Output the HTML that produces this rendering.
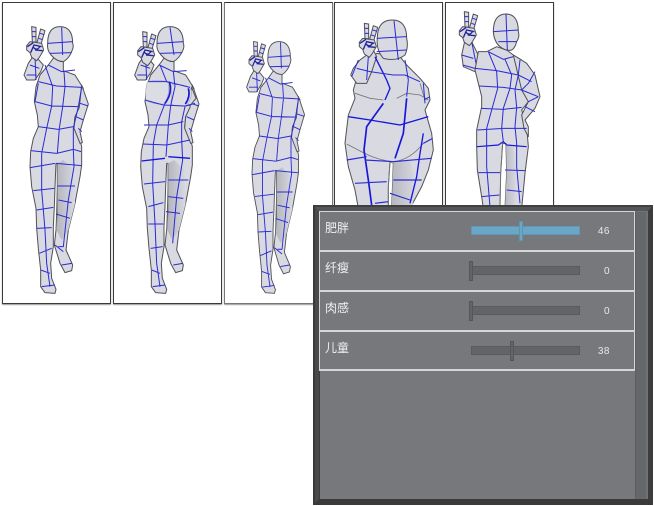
<!DOCTYPE html>
<html lang="zh">
<head>
<meta charset="utf-8">
<style>
html,body{margin:0;padding:0;background:#fff;width:654px;height:506px;overflow:hidden}
.card{position:absolute;box-sizing:border-box;top:2px;width:109px;height:302px;background:#fff;border:1px solid #3a3a3a;box-shadow:0 1px 1px #999}
svg.art{position:absolute;left:0;top:0;filter:blur(.35px)}
.panel{position:absolute;left:313px;top:205px;width:340px;height:300px;box-sizing:border-box;background:#77787b;border-style:solid;border-color:#555658 #3c3c3c #3a3a3a #4a4a4a;border-width:6px 5px 6px 6px;box-shadow:inset 1px 1px 0 #3c3c3c}
.panel:before{content:"";position:absolute;left:-6px;top:-6px;right:-5px;height:2px;background:#404040}
.panel:after{content:"";position:absolute;left:-6px;top:-6px;bottom:-6px;width:2px;background:#3a3a3a}
.scroll{position:absolute;left:316px;top:0;width:13px;height:288px;box-sizing:border-box;background:#66676a;border-left:1px solid #5c5d60;border-right:2px solid #717275;border-top:1px solid #737477}
.row{position:absolute;left:0;width:316px;height:41px;box-sizing:border-box;border:1px solid #d6d6d6;border-bottom-width:2px;color:#f0f0f0}
.lab{position:absolute;left:5px;top:9px;font-size:12px;line-height:14px;font-family:"Liberation Sans","WenQuanYi Zen Hei","Noto Sans CJK SC",sans-serif}
.track{position:absolute;left:151px;top:14px;width:109px;height:9px;box-sizing:border-box;background:#636467;border:1px solid #595a5d}
.track.on{background:#6ba6c6;border-color:#5f97b6}
.h{position:absolute;top:9px;width:4px;height:20px;box-sizing:border-box;background:#636467;border:1px solid #55565a}
.h.on{background:#6ba6c6;border-color:#5d94b2}
.val{position:absolute;right:24px;top:14px;font-size:10px;line-height:12px;color:#e8e8e8;font-family:"Liberation Sans",sans-serif;letter-spacing:.5px}
.b{fill:#d8d9e1;stroke:#505056;stroke-width:3;stroke-linejoin:round}
.l{fill:none;stroke:#2a2ad4;stroke-width:3;stroke-linejoin:round}
.t{fill:none;stroke:#1616dc;stroke-width:5;stroke-linejoin:round}
.f{fill:none;stroke:#76767c;stroke-width:2.500}
</style>
</head>
<body>
<div class="card" style="left:2px"></div>
<div class="card" style="left:113px"></div>
<div class="card" style="left:224px;border-color:#777;border-top-color:#333"></div>
<div class="card" style="left:334px"></div>
<div class="card" style="left:445px"></div>

<svg class="art" width="654" height="506" viewBox="0 0 654 506">
<defs>
<linearGradient id="sh" x1="0" x2="1" y1="0" y2="0"><stop offset="0" stop-color="#b4b5bc"/><stop offset="1" stop-color="#d8d9e1"/></linearGradient>
<g id="hand">
<path class="b" d="M95 80L108 82L108 126L97 126Z"/>
<path class="b" d="M122 87L135 92L122 136L110 131Z"/>
<path class="l" d="M96 95H108M96 110H108M120 100L133 104M116 115L128 119"/>
<path class="b" d="M80 137L90 125L125 130L131 150L118 172L110 182L95 172L90 158L80 150Z"/>
<path d="M82 140L100 128M92 158L102 135L125 140M105 150L128 152M100 142Q112 155 120 138" fill="none" stroke="#22229a" stroke-width="4"/>
</g>
<g id="head1">
<path class="b" d="M143 130Q143 80 180 80Q218 80 218 130Q222 140 216 152Q208 175 190 185Q170 185 153 165Q140 150 143 130Z"/>
<path class="l" d="M143 130L218 125M150 160L215 158M185 82L188 165"/>
</g>
<g id="body1">
<path class="b" d="M100 168L85 190L72 225L80 240L105 240L122 215L130 195L115 178Z"/>
<path class="b" d="M165 168L145 195L120 225L108 260L103 305L112 345L115 380L100 415L92 455L90 500L95 560L108 625L110 685L115 745L122 810L122 860L135 878L165 880L168 868L155 835L152 790L160 740L160 680L163 620L165 560L168 490L172 490L172 560L170 640L168 690L163 735L180 790L195 818L215 812L218 795L198 750L205 690L225 610L240 530L245 495L245 440L235 400L222 380L225 350L240 320L250 265L225 225L190 212L190 175Z"/>
<path d="M170 492L172 490L172 640L170 690L185 720L205 690L225 610L222 510L190 480Z" fill="url(#sh)"/>
<path class="f" d="M168 490L172 492L172 640L168 690"/>
<path class="b" d="M245 255L265 312L250 360L240 395L247 428L240 430L232 410L222 385L225 350L238 322Z"/>
<path class="l" d="M90 195L118 205M80 225L110 225M105 170L108 240"/>
<path class="l" d="M240 310L265 318M228 350L250 360M235 385L245 395"/>
</g>
<g id="lines1">
<path class="l" d="M145 195L185 215L225 210M115 245L170 258L245 262M105 305L155 318L235 320M115 380L175 388L220 380M92 452L170 460L220 448L243 455M90 503L165 490M168 490L245 497M100 572L163 565M172 558L225 558M110 630L160 622M175 600L215 608M110 685L155 683M168 642L210 655M118 760L155 745M165 735L190 755M122 810L150 820M125 860L165 855M185 795L215 790M135 195L158 260L155 318L140 385L125 460L125 570L135 690L140 790L150 860M192 215L195 260L188 320L178 385L172 460M235 320L220 385L220 450L222 500L205 600L190 740L175 740M115 250L105 305M245 262L235 320"/>
</g>
</defs>

<!-- figure 1 -->
<g transform="scale(.33333)">
<use href="#body1"/><use href="#lines1"/><use href="#head1"/><use href="#hand"/>
</g>

<!-- figure 2 -->
<g transform="scale(.33333)">
<g transform="translate(332 0)"><use href="#body1"/></g>
<path class="b" d="M575 262L588 295L572 315L555 318L570 285Z"/>
<path d="M442 245Q490 235 505 250Q510 285 492 312Q460 315 437 300Q435 270 442 245ZM515 255Q550 250 572 265Q580 290 560 318Q530 320 512 312Q518 285 515 255Z" fill="#dcdde4" stroke="#9a9aa4" stroke-width="1.500"/>
<path class="l" d="M478 195L520 215L560 212M445 245L500 245L570 262M435 300L490 315L555 318L585 310M432 375L505 375L550 365M428 432L500 435L570 420M432 552L495 545M505 540L565 540M445 620L490 608M505 590L550 595M445 672L490 672M498 635L540 640M452 745L488 740M455 810L480 820M458 860L495 855M520 795L548 790M480 195L500 245M495 310L470 375L460 432L458 550L465 670L470 790L480 860M520 215L525 260L512 318L505 375L498 470M555 320L545 365L545 420L548 480L530 590L518 730"/>
<path class="t" style="stroke-width:4" d="M425 483L495 475M505 470L570 475"/>
<path class="t" d="M508 245Q518 280 495 310M565 265Q572 290 556 312"/>
<g transform="translate(330 0)"><path class="b" d="M141 130Q141 80 180 80Q220 80 220 130Q224 140 218 152Q208 175 190 185Q170 185 153 165Q138 150 141 130Z"/>
<path class="l" d="M141 130L220 125M150 160L217 158M180 82L192 165"/></g>
<g transform="translate(333 15)"><use href="#hand"/></g>
</g>

<!-- figure 3 -->
<g transform="translate(225 16.4) scale(.3 .3147)">
<use href="#body1"/><use href="#lines1"/><use href="#head1"/><use href="#hand"/>
</g>

<!-- figure 4 & 5 -->
<g transform="translate(220 0) scale(.33333)">
<path class="b" d="M470 160L420 200L400 270L405 295L385 345L375 430L385 500L405 570L415 625L505 625L505 560L510 485L520 490L515 625L570 625L605 560L625 510L640 450L635 400L615 330L630 300L625 265L600 235L560 195L540 170Z"/>
<path d="M510 487L520 490L515 625L575 625L590 560L570 480Z" fill="url(#sh)"/>
<path class="f" d="M510 487L505 560L505 625M405 280L450 295L490 300M530 295L560 280L600 285L625 300M430 458Q470 480 520 485Q570 480 610 430M380 432L430 458M600 250L615 300"/>
<path class="b" d="M460 150L420 180L400 205L392 225L410 250L440 250L455 215L470 170Z"/>
<path class="l" d="M415 180L395 230M410 205L450 215M445 170L440 240"/>
<path class="t" style="stroke-width:4" d="M465 170L500 240L510 265L495 300"/>
<path class="l" d="M450 215L520 225L555 225L600 245M555 180L565 240L560 290M610 250L615 310M630 290L612 300"/>
<path class="t" d="M560 295L550 400L525 475M490 310L440 380L432 450L445 540L455 615"/>
<path class="t" style="stroke-width:4" d="M385 350L450 360L540 375L625 350M610 400L600 460L590 530L570 610"/>
<path class="l" style="stroke-width:3.500" d="M380 480L440 470M435 480L520 485L635 475M405 550L500 545M520 540L605 540M465 610L505 605M510 580L570 600M610 430L638 415"/>
<path class="b" d="M472 115Q472 60 517 60Q560 60 560 115Q566 140 555 165Q530 185 490 175Q468 150 472 115Z"/>
<path class="l" d="M470 115L560 110M470 155L560 150M522 62L535 180"/>
<g transform="translate(338 -10)"><use href="#hand"/></g>

<path class="b" d="M735 120L725 165L730 200L765 215L790 200L770 155L755 125Z"/>
<path class="l" d="M725 165L760 175M728 195L765 205M755 125L770 200"/>
<path class="b" d="M830 140L800 155L775 155L765 210L785 290L785 320L770 390L770 440L772 510L785 590L790 625L840 625L842 520L848 430L858 430L860 520L855 625L905 625L915 520L925 440L920 380L905 330L925 305L905 180L880 165L860 150Z"/>
<path d="M850 432L858 432L860 520L855 625L885 625L890 520L880 440Z" fill="url(#sh)"/>
<path class="f" d="M848 430L842 520L840 625"/>
<path class="b" d="M880 165L920 190L945 225L960 290L945 325L915 360L925 380L925 410L912 385L905 345L925 305L905 270Z"/>
<path class="l" d="M805 155L850 178L880 170M765 205L830 212L895 225L935 245M778 258L850 262L905 270L955 290M785 325L850 328L905 322M772 390L850 385L920 385M775 518L840 518M855 510L915 512M785 590L838 585M860 570L905 575M805 155L830 215L833 265L815 330L800 385L800 500L810 620M855 178L875 225L870 265L850 325L845 385L850 425M900 180L895 225L885 270L890 322L885 380L890 430L890 500L900 610M945 215L925 250L905 270M925 305L955 290M915 320L945 335"/>
<path class="t" style="stroke-width:3.500" d="M770 440L835 435L850 425L860 435L920 440"/>
<path class="b" d="M820 95Q820 42 858 42Q895 42 895 95Q900 110 890 125Q885 145 875 150Q860 155 840 140Q822 125 820 95Z"/>
<path class="l" d="M820 95L895 90M835 125L890 125M858 42L862 150"/>
<g transform="translate(638 -45)"><use href="#hand"/></g>
</g>
</svg>

<div class="panel">
  <div class="row" style="top:0"><span class="lab">肥胖</span><div class="track on"></div><div class="h on" style="left:199px"></div><span class="val">46</span></div>
  <div class="row" style="top:40px"><span class="lab">纤瘦</span><div class="track"></div><div class="h" style="left:149px"></div><span class="val">0</span></div>
  <div class="row" style="top:80px"><span class="lab">肉感</span><div class="track"></div><div class="h" style="left:149px"></div><span class="val">0</span></div>
  <div class="row" style="top:120px;height:40px"><span class="lab">儿童</span><div class="track"></div><div class="h" style="left:190px"></div><span class="val">38</span></div>
  <div class="scroll"></div>
</div>
</body>
</html>
